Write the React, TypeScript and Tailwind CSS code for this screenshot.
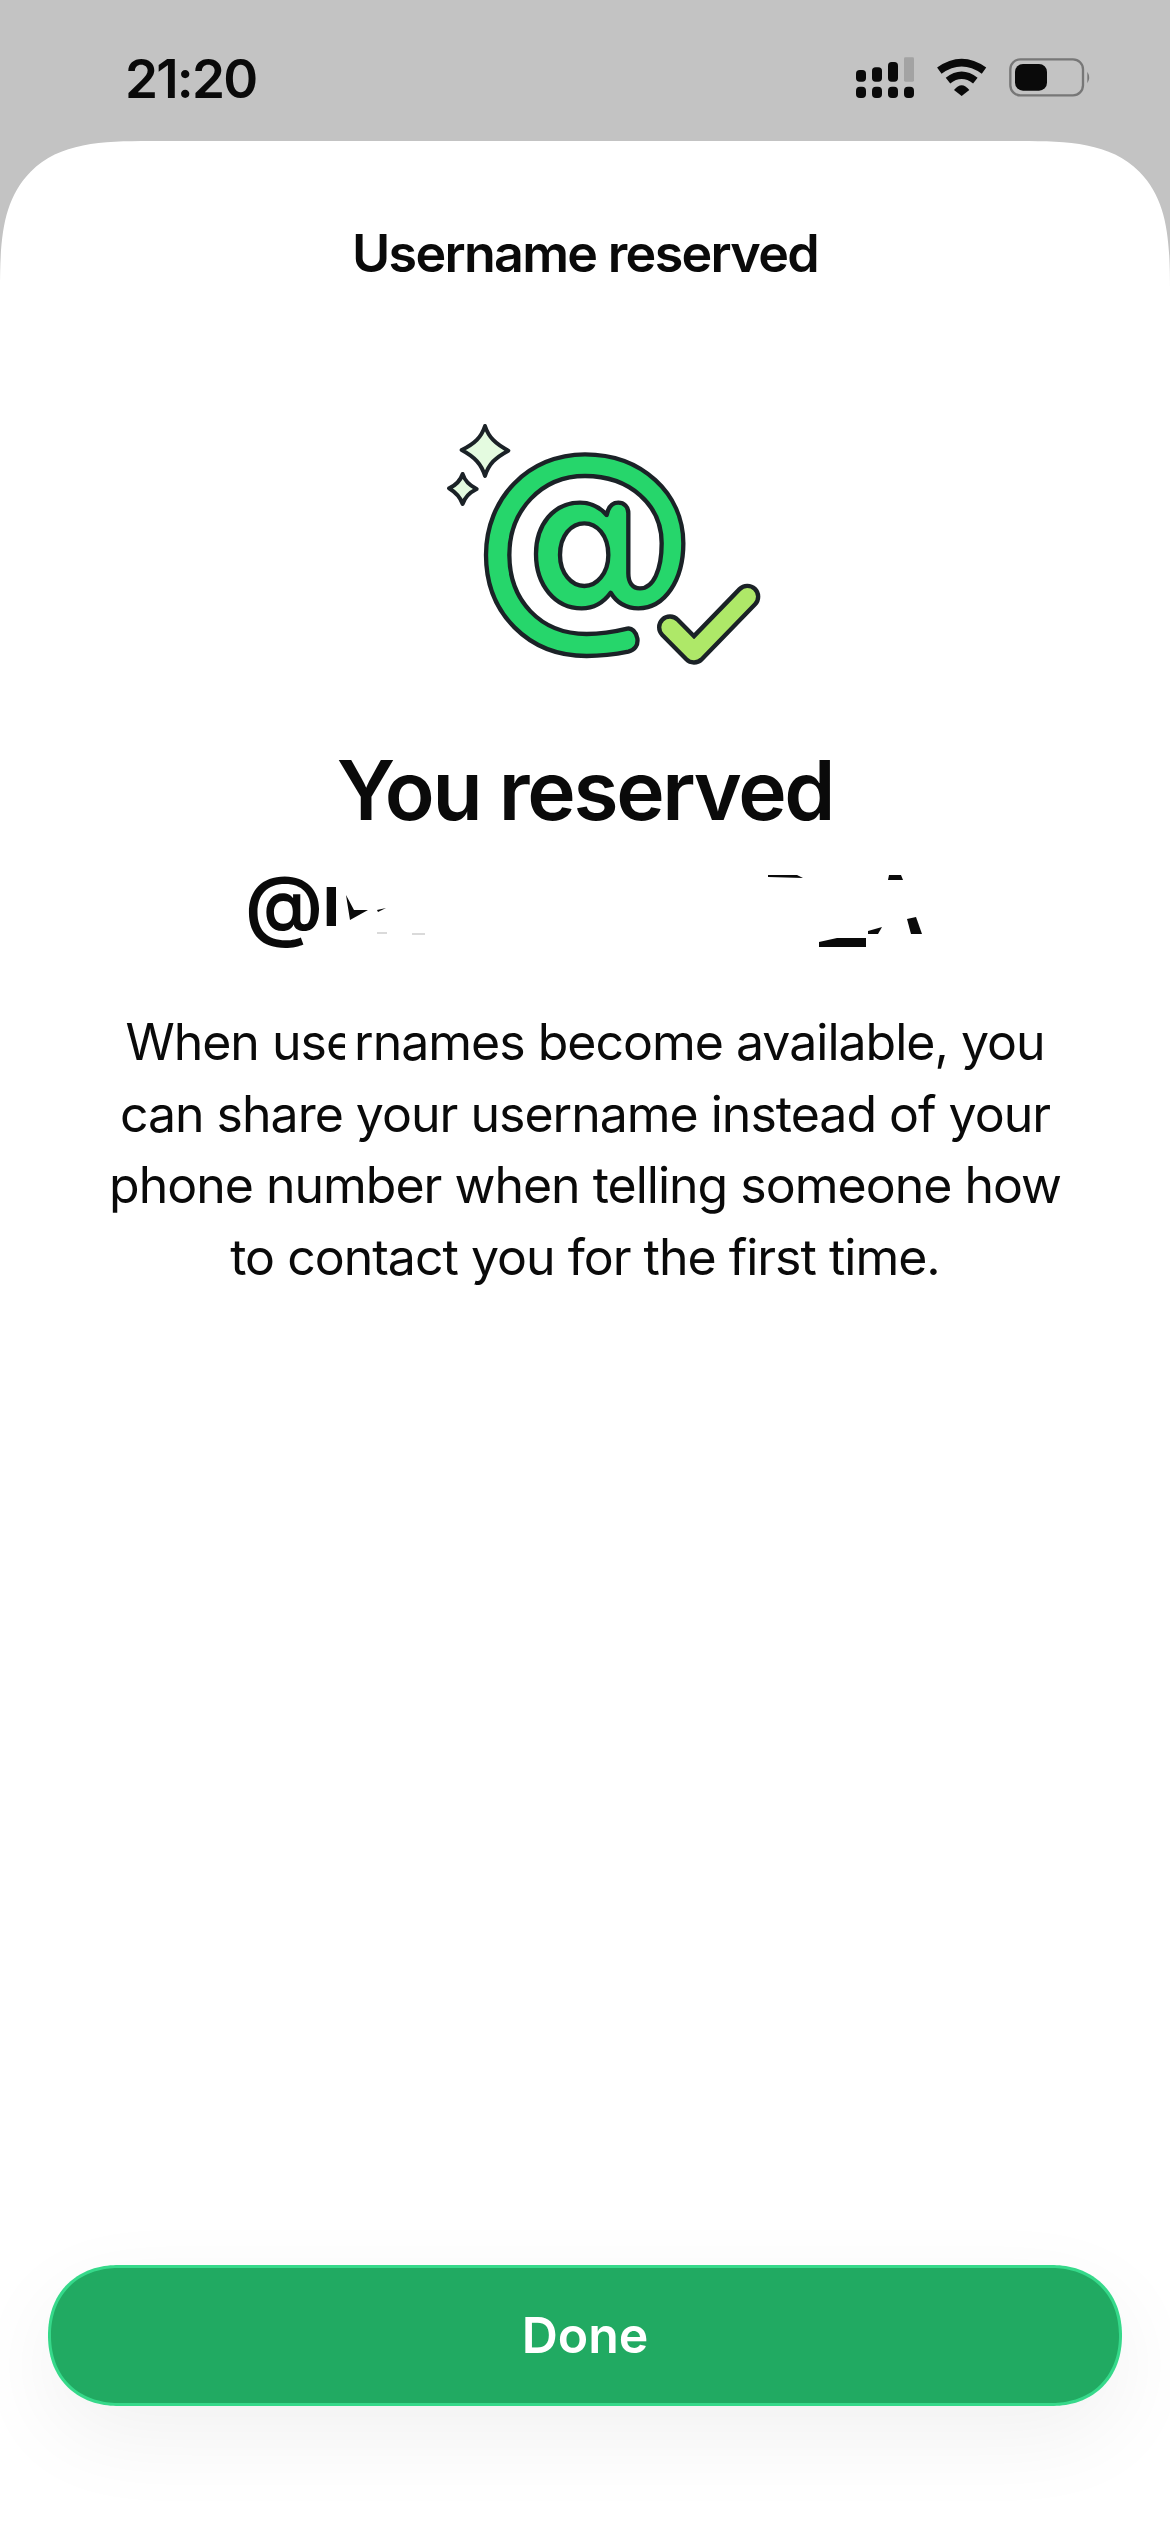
import React from 'react';

const font = { fontFamily: 'Inter, "Noto Sans", sans-serif' };

// signal bars, wifi and battery, drawn on a 3x grid
const StatusIcons = () => (
  <svg width="300" height="80" viewBox="0 0 900 240" className="block">
    <rect x="108" y="90" width="30" height="35" rx="11" fill="#0a0a0a" />
    <rect x="156" y="82" width="30" height="43" rx="11" fill="#0a0a0a" />
    <rect x="204" y="66" width="30" height="59" rx="11" fill="#0a0a0a" />
    <rect x="252" y="52" width="30" height="73" rx="4" fill="#a3a3a3" />
    <rect x="108" y="140" width="30" height="34" rx="12" fill="#0a0a0a" />
    <rect x="156" y="140" width="30" height="34" rx="12" fill="#0a0a0a" />
    <rect x="204" y="140" width="30" height="34" rx="12" fill="#0a0a0a" />
    <rect x="252" y="140" width="30" height="34" rx="12" fill="#0a0a0a" />
    <path d="M358 92 Q425 44 492 92" fill="none" stroke="#0a0a0a" strokeWidth="23" />
    <path d="M384 122 Q425 90 466 122" fill="none" stroke="#0a0a0a" strokeWidth="22" />
    <path d="M402 150 Q425 122 448 150 L425 168 Z" fill="#0a0a0a" />
    <rect x="571" y="58" width="218" height="108" rx="30" fill="none" stroke="#777777" strokeWidth="7" />
    <rect x="585" y="72" width="96" height="80" rx="24" fill="#0a0a0a" />
    <path d="M802 95 Q813 112 802 130 Z" fill="#777777" />
  </svg>
);

const AtIllustration = () => (
  <svg width="360" height="290" viewBox="0 0 1080 870" className="block">
    <path
      d="M195 78 C206 112 226 131 265 152 C226 173 206 192 195 228 C184 192 164 171 125 150 C164 131 184 112 195 78 Z"
      fill="#e4fbe0"
      stroke="#1b2227"
      strokeWidth="12"
      strokeLinejoin="round"
    />
    <path
      d="M128 222 C134 242 146 255 170 267 C146 279 134 292 128 312 C121 292 110 279 87 265 C110 255 121 242 128 222 Z"
      fill="#e4fbe0"
      stroke="#1b2227"
      strokeWidth="12"
      strokeLinejoin="round"
    />
    <path
      fillRule="evenodd"
      d="M622 686 C585 695 545 702 500 702 C360 702 268 600 268 465 C268 330 365 228 495 228 C630 228 725 315 725 430 C725 510 700 565 660 565 C638 565 625 548 625 520 L625 340 C625 320 612 308 595 308 C578 308 565 320 560 345 C540 322 512 308 480 308 C400 308 348 375 348 462 C348 555 405 625 485 625 C520 625 550 608 572 578 C590 608 620 625 655 625 C735 625 790 540 790 430 C790 280 665 163 495 163 C325 163 198 295 198 465 C198 640 325 768 500 768 C550 768 590 762 625 755 C645 750 655 735 652 715 C648 695 635 683 622 686 Z M493 370 C530 370 565 405 565 465 C565 520 530 558 493 558 C455 558 420 520 420 465 C420 405 455 370 493 370 Z"
      fill="#26d66b"
      stroke="#1b2227"
      strokeWidth="13"
      strokeLinejoin="round"
    />
    <path d="M750 682 L822 755 L982 590" fill="none" stroke="#1b2227" strokeWidth="78" strokeLinecap="round" strokeLinejoin="round" />
    <path d="M750 682 L822 755 L982 590" fill="none" stroke="#aee868" strokeWidth="52" strokeLinecap="round" strokeLinejoin="round" />
  </svg>
);

// the username is blanked out in the screenshot, only scraps of it are left
const UsernameScraps = () => (
  <svg width="760" height="100" viewBox="0 0 760 100" className="absolute left-0 top-0">
    <path d="M106 0 H760 V100 H106 Z" fill="#ffffff" />
    <path d="M90 66 H106 V100 H90 Z" fill="#ffffff" />
    <path d="M90 0 H106 V27 H90 Z" fill="#ffffff" />
    <path d="M116 35 L124 50 L138 50 L120 60 Z" fill="#0a0a0a" />
    <path d="M147 50 L156 48 L148 52 Z" fill="#0a0a0a" />
    <path d="M147 73 H157 M182 74 H195" stroke="#b5b5b5" strokeWidth="1" />
    <path d="M538 15 L567 15 L573 18 L538 17 Z" fill="#0a0a0a" />
    <path d="M659 15 L671 15 L673 20 L658 20 Z" fill="#0a0a0a" />
    <path d="M589 82 L607 78 L636 78 L636 87 L589 87 Z" fill="#0a0a0a" />
    <path d="M638 71 L652 67 L648 74 L638 74 Z" fill="#0a0a0a" />
    <path d="M677 59 L686 57 L692 74 L681 74 Z" fill="#0a0a0a" />
  </svg>
);

export default function App() {
  return (
    <div className="w-full h-[2532px] bg-[#c3c3c3] flex flex-col overflow-hidden" style={font}>
      <div className="h-[141px] shrink-0 flex justify-between">
        <div className="pl-[125px] pt-[52px] text-[53px] leading-[54px] font-semibold text-[#0a0a0a] tracking-[-1.8px]">
          21:20
        </div>
        <div className="pt-[40px] pr-[50px]">
          <StatusIcons />
        </div>
      </div>

      <div className="flex-1 bg-white rounded-t-[150px] [corner-shape:superellipse(1.6)] flex flex-col items-center text-[#0a0a0a]">
        <div className="mt-[87px] text-[52px] leading-[52px] font-semibold tracking-[-1.7px]">Username reserved</div>

        <div className="mt-[120px] ml-[30px]">
          <AtIllustration />
        </div>

        <h1 className="mt-[56px] text-[82px] leading-[90px] font-semibold tracking-[-2.3px]">You reserved</h1>

        <div className="relative mt-[24px] w-[760px] h-[100px] self-start ml-[230px]">
          <div className="pl-[15px] text-[78px] leading-[88px] font-semibold tracking-[-2px]">@M</div>
          <UsernameScraps />
        </div>

        <p className="mt-[47px] w-[1040px] text-center text-[50px] leading-[71.6px] font-normal tracking-[-1px]">
          When us
          <span className="relative">
            e<span className="absolute left-[19px] top-0 bottom-0 w-[12px] bg-white" />
          </span>
          rnames become available, you
          <br />
          can share your username instead of your
          <br />
          phone number when telling someone how
          <br />
          to contact you for the first time.
        </p>

        <button className="mt-auto mb-[126px] w-[1074px] h-[141px] rounded-[71px] [corner-shape:superellipse(1.12)] bg-[#21aa62] border-[3px] border-[#36d98a] text-white text-[50px] font-semibold shadow-[0_30px_90px_rgba(0,0,0,0.06)]">
          Done
        </button>
      </div>
    </div>
  );
}
